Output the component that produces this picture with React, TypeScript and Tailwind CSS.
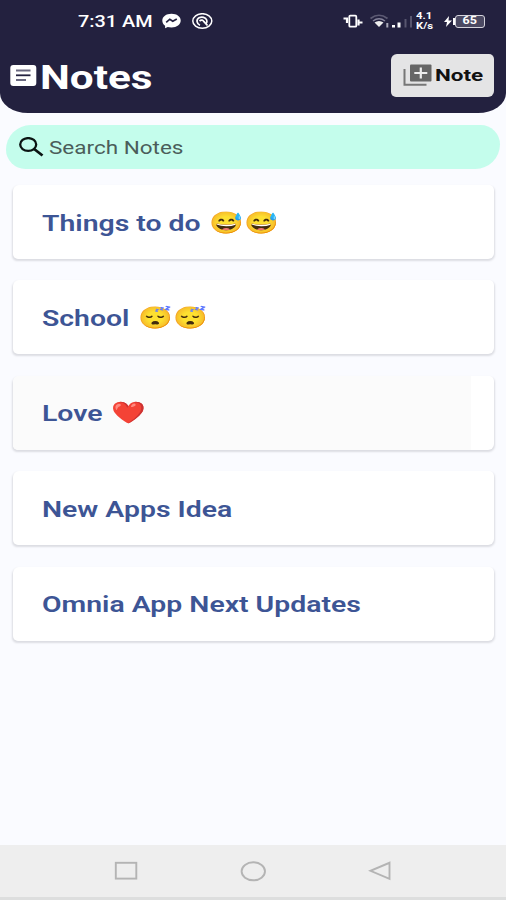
import { useState } from 'react';

const notes = [
  { id: 1, title: 'Things to do', emoji: '😅😅' },
  { id: 2, title: 'School', emoji: '😴😴' },
  { id: 3, title: 'Love', emoji: '❤️', pressed: true },
  { id: 4, title: 'New Apps Idea' },
  { id: 5, title: 'Omnia App Next Updates' },
];

const StatusBar = () => {
  return (
    <div className="flex h-[42px] items-center pl-[78px] pr-[21px] text-white">
      <span className="w-[83px] whitespace-nowrap">
        <span className="relative top-px inline-block origin-left scale-x-[1.24] text-[16px] font-medium leading-none">7:31 AM</span>
      </span>
      {/* Messenger */}
      <svg className="h-4 w-5" viewBox="0 0 20 16" fill="none">
        <path d="M10.500.7C5.200.7 1.300 3.600 1.300 7.500c0 2.200 1 4 2.800 5.200v2.500l2.600-1.200c1.100.3 2.300.4 3.800.4 5.300 0 9.200-2.900 9.200-6.900S15.800.7 10.500.7z" fill="#fff" />
        <path d="M5.200 9.300l3.600-3.100 3 2 4-2.200" stroke="#23213f" strokeWidth="1.700" />
      </svg>
      <svg className="ml-[10px] h-[17px] w-[22px]" viewBox="0 0 22 17" fill="none" stroke="#fff">
        <ellipse cx="11.300" cy="8" rx="9.500" ry="7.300" strokeWidth="1.500" />
        <path d="M9 12.300C5.500 11 5 6.500 8 4.800c3-1.500 6.700-.5 7.700 2.200.6 1.600.3 3-.8 4.200" strokeWidth="1.700" />
        <path d="M8.500 8c2-1.500 3.500-.8 4.500.7l3.500 3.800" strokeWidth="1.800" />
      </svg>
      <div className="ml-auto flex items-center">
        {/* Vibrate */}
        <svg className="mr-[4px] h-[15px] w-5" viewBox="0 0 20 15" fill="none" stroke="#fff">
          <rect x="6.300" y="1.700" width="7" height="11" rx="1" strokeWidth="1.800" />
          <path d="M.5 4.500H5M4 4v5M15.500 5.500v6M16 8.500h3.500" strokeWidth="2.200" />
        </svg>
        {/* Wifi and signal */}
        <svg className="ml-[3px] h-[15px] w-[44px]" viewBox="0 0 44 15" fill="none">
          <path d="M.5 4.500Q9-2 17.500 4.500" stroke="#5c5a73" strokeWidth="1.700" />
          <path d="M3 7Q9 2.500 15 7" stroke="#85839a" strokeWidth="1.500" />
          <path d="M4.500 8.500Q9 5.500 13.500 8.500L9 13z" fill="#eee" />
          <path d="M17.300 9v4.500" stroke="#aaa9b9" strokeWidth="2" />
          <path d="M23.500 11v2.500M29 8.500v5" stroke="#fff" strokeWidth="3" />
          <path d="M35.500 5v8.500M41 2v11.500" stroke="#57556e" strokeWidth="2" />
        </svg>
        <div className="ml-[2px] w-5 text-[9px] font-bold leading-[10px]">
          <div className="origin-left scale-x-[1.25]">4.1</div>
          <div className="origin-left scale-x-[1.25]">K/s</div>
        </div>
        <svg className="ml-[8px] h-[13px] w-2" viewBox="0 0 8 13" fill="#fff">
          <path d="M5 1L0 7h3l-1 5 6-6.500H4.500z" />
        </svg>
        <div className="ml-px h-[7px] w-[2px] bg-white" />
        <div className="flex h-[13px] w-[30px] items-center justify-center rounded-[3px] border-[1.500px] border-[#d5d4dc] bg-[#4b4962]">
          <span className="inline-block scale-x-[1.25] text-[10px] font-bold leading-none">65</span>
        </div>
      </div>
    </div>
  );
};

const Header = () => {
  return (
    <header className="h-[113px] rounded-b-[28px_20px] bg-[#23213f]">
      <StatusBar />
      <div className="flex h-[68px] items-center pl-[10px] pr-3">
        <svg className="h-[22px] w-[27px]" viewBox="0 0 27 22">
          <rect x="0.300" y="0" width="26" height="21" rx="3" fill="#fff" />
          <path d="M6 5.500h14.500M6 15h10" stroke="#6a6980" strokeWidth="2" />
          <path d="M6 10.300h14.500" stroke="#23213f" strokeWidth="1.800" />
        </svg>
        <h1 className="ml-[3px] mt-[3px] origin-left scale-x-[1.28] text-[33px] font-bold leading-none text-white">Notes</h1>
        <button className="-mt-[2px] ml-auto flex h-[43px] w-[103px] items-center rounded-[6px_5px] bg-[#e4e4e5] pl-[12px] text-[#111]">
          <svg className="h-[23px] w-[29px]" viewBox="0 0 29 23" fill="none">
            <path d="M1.500 5v15.800h22" stroke="#777" strokeWidth="2" />
            <rect x="7" y="0.500" width="21.500" height="17" rx="1" fill="#666" />
            <path d="M17.800 3.500v11M11.300 9h13" stroke="#eee" strokeWidth="2.200" />
          </svg>
          <span className="ml-[3px] origin-left scale-x-[1.32] text-[17px] font-bold leading-none">Note</span>
        </button>
      </div>
    </header>
  );
};

const NavBar = () => {
  return (
    <nav className="mt-auto flex h-[55px] items-center justify-between border-b-[3px] border-[#dddede] bg-[#eeeeee] pl-[114px] pr-[114px]">
      <svg className="h-5 w-6" viewBox="0 0 24 20" fill="none" stroke="#b4b4b4" strokeWidth="1.900">
        <rect x="1.800" y="1.800" width="20.500" height="15.800" />
      </svg>
      <svg className="h-[21px] w-[26px]" viewBox="0 0 26 21" fill="none" stroke="#b4b4b4" strokeWidth="1.900">
        <ellipse cx="13.300" cy="10.300" rx="11.700" ry="9" />
      </svg>
      <svg className="h-5 w-6" viewBox="0 0 24 20" fill="none" stroke="#b4b4b4" strokeWidth="1.900">
        <path d="M21.500 1.800v16L2.500 9.800z" />
      </svg>
    </nav>
  );
};

const App = () => {
  const [search, setSearch] = useState('');

  return (
    <div className="flex h-[900px] w-[506px] flex-col overflow-hidden bg-[#fafbff] font-[Roboto,'Noto_Color_Emoji',sans-serif]">
      <Header />

      {/* Search */}
      <div className="mx-[6px] mt-3 flex h-11 shrink-0 items-center rounded-[28px_22px] bg-[#c4fdec] pl-[13px]">
        <svg className="h-5 w-[25px]" viewBox="0 0 25 20" fill="none" stroke="#0b1412">
          <ellipse cx="9.200" cy="7.500" rx="8" ry="6.400" strokeWidth="2.300" />
          <path d="M14.500 11.500l9 7" strokeWidth="2.800" />
        </svg>
        <input
          type="text"
          value={search}
          onChange={(e) => setSearch(e.target.value)}
          placeholder="Search Notes"
          className="ml-[5px] w-[300px] origin-left scale-x-[1.25] bg-transparent text-[18px] leading-none text-[#333] outline-none placeholder:text-[#4b5d5a]"
        />
      </div>

      {/* Notes list */}
      <div className="ml-[13px] mr-[12.500px] mt-4 flex flex-col gap-[21.400px]">
        {notes.map((note) => (
          <div
            key={note.id}
            className="flex h-[74px] items-center overflow-hidden rounded-[6px_5px] bg-white shadow-[0_1.500px_2px_0.500px_rgba(40,40,60,0.14)]"
          >
            <div className={note.pressed ? 'flex h-full w-[458px] items-center bg-[#fbfbfb] pl-[29px] pt-[3px]' : 'flex h-full w-[458px] items-center pl-[29px] pt-[3px]'}>
              <span className="origin-left scale-x-[1.29] whitespace-nowrap text-[22px] font-semibold leading-none text-[#3d5595]">
                {note.title} <span className="relative -top-px ml-[1.500px] text-[21.500px]">{note.emoji}</span>
              </span>
            </div>
          </div>
        ))}
      </div>

      <NavBar />
    </div>
  );
};

export default App;
